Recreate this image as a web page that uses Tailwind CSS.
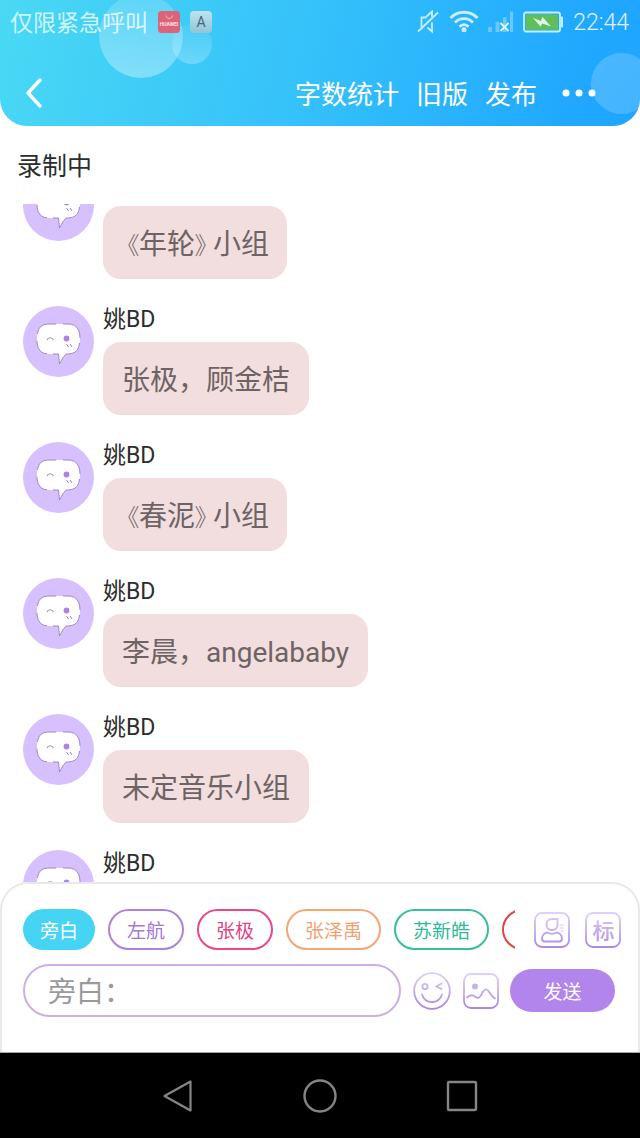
<!DOCTYPE html>
<html lang="zh-CN">
<head>
<meta charset="utf-8">
<meta name="viewport" content="width=device-width, initial-scale=1">
<title>录制中</title>
<script src="https://cdn.jsdelivr.net/npm/@tailwindcss/browser@4"></script>
</head>
<body class="flex h-screen flex-col bg-white font-[Roboto,'Noto_Sans_CJK_SC',sans-serif] text-[#2c2c2c]">

<!-- Shared symbols -->
<svg class="absolute size-0" aria-hidden="true">
  <symbol id="avatar" viewBox="0 0 71 71">
    <circle cx="35.500" cy="35.500" r="35.500" fill="#d6c0fd"/>
    <path d="M27 18H45C53 18 57 23 57 32.500C57 43 53 48 44.500 48H43C40 51.500 38 54.500 36.500 58C36 54 36 51 35.500 48H27C18 48 14 43 14 33C14 23 18 18 27 18Z" fill="#fff"/>
    <path d="M40 18H46C53 18.500 57 23 57 32M56.500 37C56 44 52 48 44.500 48H43C40 51.500 38 54.500 36.500 58C36 54 36 51 35.500 48H30M24 47.800C18 47.500 14 43 14 35M14.500 28C15.500 21 19 18 26 18H33" fill="none" stroke="#9f88c6" stroke-width="1"/>
    <path d="M24 34C25 31 29.500 31 30.500 34" fill="none" stroke="#a79ac0" stroke-width="1.200"/>
    <circle cx="43.500" cy="32.500" r="2.900" fill="#a983e6"/>
    <path d="M43.500 38L45.500 41M47 38L49 41" stroke="#9a84bd" stroke-width="1"/>
  </symbol>
  <linearGradient id="violet" x1="0" y1="0" x2="0" y2="38" gradientUnits="userSpaceOnUse">
    <stop offset="0" stop-color="#e0d2fa"/><stop offset="1" stop-color="#a982e0"/>
  </linearGradient>
</svg>

<header class="relative shrink-0 overflow-hidden rounded-b-[27px] bg-[linear-gradient(102deg,#49d9f4_0%,#35c1fa_48%,#1fa6ff_92%)] text-white">
  <div class="absolute -top-1.5 left-[99px] size-[84px] rounded-full bg-linear-to-b from-white/15 to-white/35"></div>
  <div class="absolute top-6 left-[172px] size-10 rounded-full bg-linear-to-b from-white/5 to-white/25"></div>
  <div class="absolute top-[53px] -right-3 size-[61px] rounded-full bg-linear-to-br from-white/20 to-white/15"></div>

  <div class="relative flex h-11 items-center pr-[11px] pl-2.5 text-white/75">
    <span class="pt-0.5 text-[23px] leading-none">仅限紧急呼叫</span>
    <svg class="ml-2.5 size-[22px]" viewBox="0 0 22 22" role="img" aria-label="HUAWEI">
      <rect width="22" height="22" rx="3.500" fill="#dc6378"/>
      <path d="M8 4.500C8.500 8.500 14 8.500 14.500 4.500" fill="none" stroke="#f8bcc4" stroke-width="1"/>
      <text x="11" y="15" text-anchor="middle" font-family="Roboto" font-size="5" font-weight="700" fill="#fbe1e4">HUAWEI</text>
    </svg>
    <span class="ml-2.5 flex size-[22px] items-center justify-center rounded bg-linear-to-b from-[#bfe4ee] to-[#8fc5d6] text-[14px] leading-none text-[#426878]">A</span>
    <span class="flex-1"></span>
    <svg class="h-6 w-[22px]" viewBox="0 0 22 24" fill="none" stroke="#c5efff" stroke-width="1.800" aria-label="静音">
      <path d="M1 21.500L21 2.500"/><path d="M4.500 17.500V7.500H8.500L15 1.500V7M15 12.500V21.500L10.500 17.500"/>
    </svg>
    <svg class="ml-2.5 h-6 w-[30px]" viewBox="0 0 30 24" fill="none" stroke="#c9f0ff" stroke-width="2.800" aria-label="Wi-Fi">
      <path d="M1.500 8C9 0.300 21 0.300 28.500 8M6 12.500C11 7.300 19 7.300 24 12.500M10.500 16.800C13 14 17 14 19.500 16.800"/>
      <circle cx="15" cy="19.800" r="2.500" fill="#c9f0ff" stroke="none"/>
    </svg>
    <svg class="ml-2 h-6 w-[27px]" viewBox="0 0 27 24" aria-label="无信号">
      <path d="M1 22V17H5V22ZM8.500 22V12H12.500V22ZM16 22V7H19.500V22ZM23 22V1.500H26V22Z" fill="#6bc7fc"/>
      <path d="M13.500 13L21.500 21M21.500 13L13.500 21" stroke="#e1f6ff" stroke-width="1.800"/>
    </svg>
    <svg class="ml-[9px] h-[22px] w-10" viewBox="0 0 40 22" aria-label="正在充电">
      <rect x="1" y="1.500" width="36" height="19" rx="2" fill="none" stroke="#c5efff" stroke-width="1.800"/>
      <path d="M38 6H39.500V16H38" fill="#c5efff" stroke="#c5efff"/>
      <rect x="3" y="3.500" width="32" height="15" fill="#60bf59"/>
      <path d="M10 7L18 10L19.500 6L28 15.500L19.500 12.500L17.500 15.500Z" fill="#e3f7e9"/>
    </svg>
    <span class="ml-2.5 text-[23px] leading-none font-light text-white/85">22:44</span>
  </div>

  <nav class="relative mt-4 flex h-[66px] items-center gap-[17px] pr-11 pl-6 text-[26px] leading-none">
    <button class="mr-auto" aria-label="返回">
      <svg class="h-8 w-5" viewBox="0 0 20 32" fill="none" stroke="#fff" stroke-width="3.400" stroke-linecap="round" stroke-linejoin="round"><path d="M16 3L4 16L16 29"/></svg>
    </button>
    <button class="pt-1">字数统计</button>
    <button class="pt-1">旧版</button>
    <button class="pt-1">发布</button>
    <button class="ml-2" aria-label="更多">
      <svg class="h-2 w-[34px]" viewBox="0 0 34 8" fill="#fff"><circle cx="4" cy="4" r="3.500"/><circle cx="17" cy="4" r="3.500"/><circle cx="30" cy="4" r="3.500"/></svg>
    </button>
  </nav>
</header>

<h1 class="flex h-[78px] shrink-0 items-center px-[17px] pt-1 text-[25px]">录制中</h1>

<main class="min-h-0 flex-1 overflow-hidden">
  <ul class="-mt-[34px] flex flex-col gap-[27px] px-[23px]">
    <li class="flex gap-[9px]">
      <svg class="size-[71px] shrink-0" aria-hidden="true"><use href="#avatar"/></svg>
      <p class="mt-9 rounded-[18px] bg-[#f2dedf] px-[18px] pt-[18px] pb-3.5 text-[28px] leading-[41px] text-[#6e6364] [font-feature-settings:'palt']"><span class="pl-1.5 text-2xl leading-none font-light">《</span>年轮<span class="pr-1.5 text-2xl leading-none font-light">》</span>小组</p>
    </li>
    <li class="flex gap-[9px]">
      <svg class="size-[71px] shrink-0" aria-hidden="true"><use href="#avatar"/></svg>
      <div class="flex flex-col items-start gap-2">
        <span class="text-[23px] leading-7">姚BD</span>
        <p class="rounded-[18px] bg-[#f2dedf] px-[19px] pt-[18px] pb-3.5 text-[28px] leading-[41px] text-[#6e6364]">张极，顾金桔</p>
      </div>
    </li>
    <li class="flex gap-[9px]">
      <svg class="size-[71px] shrink-0" aria-hidden="true"><use href="#avatar"/></svg>
      <div class="flex flex-col items-start gap-2">
        <span class="text-[23px] leading-7">姚BD</span>
        <p class="rounded-[18px] bg-[#f2dedf] px-[18px] pt-[18px] pb-3.5 text-[28px] leading-[41px] text-[#6e6364] [font-feature-settings:'palt']"><span class="pl-1.5 text-2xl leading-none font-light">《</span>春泥<span class="pr-1.5 text-2xl leading-none font-light">》</span>小组</p>
      </div>
    </li>
    <li class="flex gap-[9px]">
      <svg class="size-[71px] shrink-0" aria-hidden="true"><use href="#avatar"/></svg>
      <div class="flex flex-col items-start gap-2">
        <span class="text-[23px] leading-7">姚BD</span>
        <p class="rounded-[18px] bg-[#f2dedf] px-[19px] pt-[18px] pb-3.5 text-[28px] leading-[41px] text-[#6e6364]">李晨，angelababy</p>
      </div>
    </li>
    <li class="flex gap-[9px]">
      <svg class="size-[71px] shrink-0" aria-hidden="true"><use href="#avatar"/></svg>
      <div class="flex flex-col items-start gap-2">
        <span class="text-[23px] leading-7">姚BD</span>
        <p class="rounded-[18px] bg-[#f2dedf] px-[19px] pt-[18px] pb-3.5 text-[28px] leading-[41px] text-[#6e6364]">未定音乐小组</p>
      </div>
    </li>
    <li class="flex gap-[9px]">
      <svg class="size-[71px] shrink-0" aria-hidden="true"><use href="#avatar"/></svg>
      <span class="text-[23px] leading-7">姚BD</span>
    </li>
  </ul>
</main>

<section class="shrink-0 rounded-t-[28px] border-2 border-b-0 border-[#e9e9e9] bg-white pt-[25px] pb-[35px] pl-[21px]">
  <div class="flex items-center pr-[17px]">
    <div class="flex min-w-0 flex-1 gap-[13px] overflow-hidden text-[19px] leading-none">
      <button class="h-[41px] shrink-0 rounded-full bg-[#45d4f3] px-[17px] pt-1 text-white">旁白</button>
      <button class="h-[41px] shrink-0 rounded-full border-2 border-[#ae82d8] px-[17px] pt-1 text-[#a578d2]">左航</button>
      <button class="h-[41px] shrink-0 rounded-full border-2 border-[#e8488a] px-[17px] pt-1 text-[#e34383]">张极</button>
      <button class="h-[41px] shrink-0 rounded-full border-2 border-[#f6a573] px-[17px] pt-1 text-[#f2a070]">张泽禹</button>
      <button class="h-[41px] shrink-0 rounded-full border-2 border-[#36bf9f] px-[17px] pt-1 text-[#2fb999]">苏新皓</button>
      <button class="h-[41px] w-[76px] shrink-0 rounded-full border-2 border-[#e0443e]" aria-label="其他角色"></button>
    </div>
    <button class="ml-[19px]" aria-label="角色">
      <svg class="size-9" viewBox="0 0 36 36" fill="none" stroke="url(#violet)" stroke-width="1.800">
        <rect x="1" y="1" width="34" height="34" rx="7"/>
        <path d="M23.500 7V12.500C23.500 16 21 18 18 18C14.500 18 12.500 15.500 12.500 12.500C12.500 9.500 14.500 7 18 7Z"/>
        <path d="M13.500 20.500C16 22 20 22 22.500 20.500C25.500 20.500 28 23.500 28 26.500C28 28.500 27 29.500 25 29.500H11C9 29.500 8 28.500 8 26.500C8 23.500 10.500 20.500 13.500 20.500Z"/>
        <path d="M25.500 13H29.500M25.500 16H29.500M26.500 19H29.500" stroke-width="1.200" stroke="#d5c4f4"/>
      </svg>
    </button>
    <button class="ml-[15px]" aria-label="标">
      <svg class="size-9" viewBox="0 0 36 36">
        <rect x="1" y="1" width="34" height="34" rx="7" fill="none" stroke="url(#violet)" stroke-width="1.800"/>
        <text x="18.500" y="26.500" text-anchor="middle" font-family="'Noto Sans CJK SC'" font-size="22" font-weight="500" fill="url(#violet)">标</text>
      </svg>
    </button>
  </div>
  <form class="mt-3.5 flex items-center pr-[23px]">
    <input type="text" aria-label="台词" placeholder="旁白：" class="h-[53px] min-w-0 flex-1 rounded-full border-2 border-[#cbb0e4] pt-1 pl-[23px] text-[28px] outline-none placeholder:text-[#9a9a9a]">
    <button type="button" class="ml-3" aria-label="表情">
      <svg class="size-[38px]" viewBox="0 0 38 38" fill="none" stroke="url(#violet)" stroke-width="1.800">
        <circle cx="19" cy="19" r="17.800"/><circle cx="12" cy="14.500" r="2.600"/>
        <path d="M28.500 11.500L23.500 14.500L28.500 17M9 22.500C12 32.500 26 32.500 29 22.500" stroke-linecap="round"/>
      </svg>
    </button>
    <button type="button" class="ml-3" aria-label="图片">
      <svg class="size-[36px]" viewBox="0 0 36 36" fill="none" stroke="url(#violet)" stroke-width="1.800">
        <rect x="1" y="1" width="34" height="34" rx="7"/>
        <circle cx="12" cy="13.500" r="3" fill="#c8b0ef" stroke="none"/>
        <path d="M4 24.500C8 21 10.500 22 12.500 24C16 26.500 17.500 23.500 19.500 19.500C22 14.500 24.500 16 26.500 19.500C28 22 29.500 24 32 25.500" stroke-linecap="round"/>
      </svg>
    </button>
    <button type="submit" class="ml-[11px] h-[43px] w-[105px] rounded-full bg-[#b285ed] pt-1 text-[19px] leading-none text-white">发送</button>
  </form>
</section>

<nav class="flex h-[86px] shrink-0 items-center justify-center gap-[109px] border-t border-[#a8a8a8] bg-black" aria-label="系统导航">
  <button aria-label="返回"><svg class="size-8" viewBox="0 0 32 32" fill="none" stroke="#858585" stroke-width="2.200" stroke-linejoin="round"><path d="M2.500 16L28.500 1.500V30.500Z"/></svg></button>
  <button aria-label="主屏幕"><svg class="size-[34px]" viewBox="0 0 34 34" fill="none" stroke="#858585" stroke-width="2.400"><circle cx="17" cy="17" r="15.500"/></svg></button>
  <button aria-label="最近任务"><svg class="size-8" viewBox="0 0 32 32" fill="none" stroke="#858585" stroke-width="2.400"><rect x="2" y="2" width="28" height="28" rx="1"/></svg></button>
</nav>
</body>
</html>
